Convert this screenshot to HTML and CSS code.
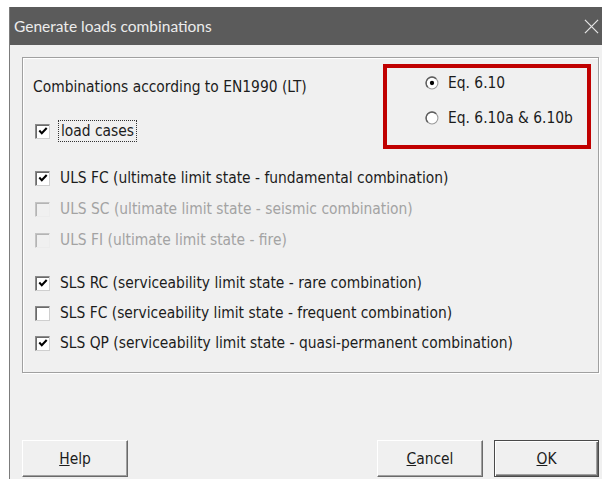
FILE: index.html
```html
<!DOCTYPE html>
<html lang="en">
<head>
<meta charset="utf-8">
<title>Generate loads combinations</title>
<link rel="stylesheet" href="styles.css">
</head>
<body>
<div class="window">
  <div class="titlebar">
    <span class="title">Generate loads combinations</span>
    <svg class="close" width="16" height="16" viewBox="0 0 16 16"><path d="M1 1 L15 15 M15 1 L1 15" stroke="#e6e6e6" stroke-width="1.3" fill="none"/></svg>
  </div>
  <div class="client">
    <div class="group">
      <div class="top">
        <div class="left">
          <div class="label">Combinations according to EN1990 (LT)</div>
          <div class="row">
            <span class="box"><svg viewBox="0 0 13 13"><path d="M2.5 6 L5.2 9 L10.5 3.2" stroke="#000" stroke-width="2.2" fill="none"/></svg></span>
            <span class="text focus">load cases</span>
          </div>
        </div>
        <div class="radios">
          <div class="radio">
            <svg class="dot" viewBox="0 0 13 13"><circle cx="6.5" cy="6.5" r="5.5" fill="#fff" stroke="#9a9a9a"/><path d="M2.6 10.4 A5.5 5.5 0 0 1 10.4 2.6" stroke="#5e5e5e" stroke-width="1.3" fill="none"/><circle cx="6.5" cy="6.5" r="2" fill="#000"/></svg>
            <span class="text">Eq. 6.10</span>
          </div>
          <div class="radio">
            <svg class="dot" viewBox="0 0 13 13"><circle cx="6.5" cy="6.5" r="5.5" fill="#fff" stroke="#9a9a9a"/><path d="M2.6 10.4 A5.5 5.5 0 0 1 10.4 2.6" stroke="#5e5e5e" stroke-width="1.3" fill="none"/></svg>
            <span class="text">Eq. 6.10a &amp; 6.10b</span>
          </div>
        </div>
      </div>
      <div class="rows uls">
        <div class="row">
          <span class="box"><svg viewBox="0 0 13 13"><path d="M2.5 6 L5.2 9 L10.5 3.2" stroke="#000" stroke-width="2.2" fill="none"/></svg></span>
          <span class="text">ULS FC (ultimate limit state - fundamental combination)</span>
        </div>
        <div class="row disabled">
          <span class="box"></span>
          <span class="text">ULS SC (ultimate limit state - seismic combination)</span>
        </div>
        <div class="row disabled">
          <span class="box"></span>
          <span class="text">ULS FI (ultimate limit state - fire)</span>
        </div>
      </div>
      <div class="rows sls">
        <div class="row">
          <span class="box"><svg viewBox="0 0 13 13"><path d="M2.5 6 L5.2 9 L10.5 3.2" stroke="#000" stroke-width="2.2" fill="none"/></svg></span>
          <span class="text">SLS RC (serviceability limit state - rare combination)</span>
        </div>
        <div class="row">
          <span class="box"></span>
          <span class="text">SLS FC (serviceability limit state - frequent combination)</span>
        </div>
        <div class="row">
          <span class="box"><svg viewBox="0 0 13 13"><path d="M2.5 6 L5.2 9 L10.5 3.2" stroke="#000" stroke-width="2.2" fill="none"/></svg></span>
          <span class="text">SLS QP (serviceability limit state - quasi-permanent combination)</span>
        </div>
      </div>
    </div>
    <div class="buttons">
      <button class="btn"><u>H</u>elp</button>
      <div class="right">
        <button class="btn"><u>C</u>ancel</button>
        <button class="btn default"><u>O</u>K</button>
      </div>
    </div>
  </div>
</div>
</body>
</html>
```

FILE: styles.css
```css
html, body {
  margin: 0;
  background: #ffffff;
}

body {
  width: 602px;
  height: 479px;
  overflow: hidden;
  font-family: "DejaVu Sans Condensed", "DejaVu Sans", sans-serif;
  font-stretch: condensed;
  font-size: 15.4px;
  color: #1c1c1c;
}

.window {
  margin: 7px 0 0 9px;
  width: 600px;
  height: 472px;
  border-left: 1px solid #7c7c7c;
  display: flex;
  flex-direction: column;
}

.titlebar {
  height: 38px;
  flex: none;
  background: #5b5b5b;
  display: flex;
  align-items: center;
  padding-left: 4px;
}

.title {
  font-family: "Lato", "Noto Sans", sans-serif;
  font-stretch: normal;
  font-size: 15.5px;
  color: #ececec;
  flex: 1;
}

.close {
  margin-right: 11px;
  margin-top: 1px;
  width: 15px;
  height: 15px;
}

.client {
  flex: 1;
  background: #f0f0f0;
  padding: 12px 0 0 12px;
}

/* etched group frame */
.group {
  box-sizing: border-box;
  width: 577px;
  height: 316px;
  border: 1px solid #a0a0a0;
  box-shadow: inset 1px 1px 0 #ffffff, 1px 1px 0 #ffffff;
}

.top {
  display: flex;
}

.left {
  width: 360px;
  padding-left: 10px;
  box-sizing: border-box;
}

.label {
  line-height: 20px;
  margin-top: 19px;
}

.row {
  display: flex;
  align-items: center;
  height: 22px;
}

.left .row {
  margin-top: 23px;
}

.box {
  box-sizing: border-box;
  width: 15px;
  height: 15px;
  margin-left: 2px;
  margin-right: 10px;
  background: #ffffff;
  border: 1px solid;
  border-color: #8a8a8a #cfcfcf #cfcfcf #8a8a8a;
  box-shadow: inset 1px 1px 0 #6a6a6a;
  display: flex;
  align-items: center;
  justify-content: center;
}

.box svg {
  width: 12px;
  height: 12px;
}

.text {
  line-height: 18px;
  white-space: nowrap;
}

.focus {
  outline: 1px dotted #333;
  outline-offset: 1px;
  padding: 0 1px;
}

.disabled .text {
  color: #a3a3a3;
}

.disabled .box {
  background: #f0f0f0;
  border-color: #c4c4c4 #ececec #ececec #c4c4c4;
  box-shadow: inset 1px 1px 0 #b4b4b4;
}

/* radio choices inside a red frame */
.radios {
  box-sizing: border-box;
  margin-top: 6px;
  width: 208px;
  height: 85px;
  border: 4px solid #c00000;
  padding: 5px 0 0 38px;
  display: flex;
  flex-direction: column;
  gap: 15px;
}

.radio {
  display: flex;
  align-items: center;
  height: 20px;
}

.radio .dot {
  width: 14px;
  height: 14px;
  margin-right: 9px;
}

.rows {
  padding-left: 10px;
  display: flex;
  flex-direction: column;
}

.uls {
  margin-top: 18px;
  gap: 9px;
}

.sls {
  margin-top: 21px;
  gap: 8px;
}

.buttons {
  margin-top: 67px;
  display: flex;
  justify-content: space-between;
  width: 577px;
}

.right {
  display: flex;
  gap: 11px;
}

.btn {
  width: 106px;
  height: 37px;
  font: inherit;
  color: #1c1c1c;
  background: #f0f0f0;
  border: 1px solid;
  border-color: #ffffff #6a6a6a #6a6a6a #ffffff;
  box-shadow: inset -1px -1px 0 #a0a0a0;
  padding: 0;
}

.btn.default {
  width: 105px;
  border: 1px solid #4a4a4a;
  box-shadow: inset 1px 1px 0 #ffffff, inset -1px -1px 0 #6a6a6a, inset -2px -2px 0 #a0a0a0;
}
```
